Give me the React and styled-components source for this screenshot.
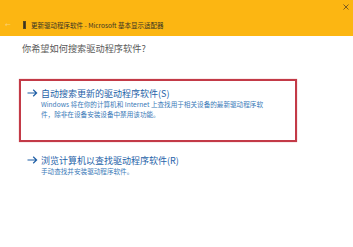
import styled, { createGlobalStyle } from 'styled-components';

const GlobalStyle = createGlobalStyle`
    html, body {
        margin: 0;
        padding: 0;
        background: #ffffff;
    }
    body {
        font-family: "Noto Sans", "Noto Sans CJK SC", sans-serif;
    }
`

function Arrow() {
    return (
        <svg width="11" height="8" viewBox="0 0 11 8">
            <path d="M0.5 4 H9.5 M6.2 0.8 L9.6 4 L6.2 7.2" fill="none" stroke="#1f5fa6" strokeWidth="1.2" />
        </svg>
    )
}

function CloseIcon() {
    return (
        <svg width="6" height="6" viewBox="0 0 6 6">
            <path d="M0.5 0.5 L5.5 5.5 M5.5 0.5 L0.5 5.5" stroke="#6e5120" strokeWidth="0.9" />
        </svg>
    )
}

export default function App() {
    let options = [
        {
            title: "自动搜索更新的驱动程序软件(S)",
            lines: ["Windows 将在你的计算机和 Internet 上查找用于相关设备的最新驱动程序软", "件，除非在设备安装设备中禁用该功能。"],
            selected: true
        },
        {
            title: "浏览计算机以查找驱动程序软件(R)",
            lines: ["手动查找并安装驱动程序软件。"],
            selected: false
        }
    ];

    return (
        <>
            <GlobalStyle />
            <Window>
                <Header>
                    <TopBar>
                        <CloseIcon />
                    </TopBar>
                    <TitleRow>
                        <Back>←</Back>
                        <DeviceIcon />
                        <Title>更新驱动程序软件 - Microsoft 基本显示适配器</Title>
                    </TitleRow>
                </Header>
                <Body>
                    <Heading>你希望如何搜索驱动程序软件?</Heading>
                    {options.map((opt) => (
                        <Option key={opt.title} selected={opt.selected}>
                            <OptionTitle>
                                <ArrowBox><Arrow /></ArrowBox>
                                {opt.title}
                            </OptionTitle>
                            <Description>
                                {opt.lines.map((l) => <div key={l}>{l}</div>)}
                            </Description>
                        </Option>
                    ))}
                </Body>
            </Window>
        </>
    )
}

const Window = styled.div`
    width: 353px;
    height: 247px;
    background: #ffffff;
    overflow: hidden;
`
const Header = styled.div`
    height: 36px;
    background: #fcb612;
    display: flex;
    flex-direction: column;
`
const TopBar = styled.div`
    height: 13px;
    display: flex;
    justify-content: flex-end;
    align-items: center;
    padding-right: 4px;
`
const TitleRow = styled.div`
    height: 23px;
    display: flex;
    align-items: center;
    padding-left: 5px;
`
const Back = styled.span`
    font-size: 7px;
    color: #f9d27a;
    width: 18px;
    font-family: "DejaVu Sans", sans-serif;
`
const DeviceIcon = styled.div`
    width: 3px;
    height: 8px;
    background: #3a3220;
    border: 1px solid #5a4a20;
    box-sizing: border-box;
    margin-right: 5px;
`
const Title = styled.span`
    font-size: 6.5px;
    color: #3a3524;
    font-family: "Noto Sans CJK SC", sans-serif;
`
const Body = styled.div`
    padding-left: 22px;
    display: flex;
    flex-direction: column;
    align-items: flex-start;
`
const Heading = styled.div`
    margin-top: 5px;
    height: 14px;
    line-height: 14px;
    font-size: 9.2px;
    color: #5a5a5a;
    font-family: "Noto Sans CJK SC", sans-serif;
`
const Option = styled.div`
    box-sizing: border-box;
    width: 278px;
    margin-left: -3px;
    padding: 6px 6px 0 ${props => props.selected ? '6px' : '8px'};
    border: ${props => props.selected ? '2px solid #c33a47' : '0'};
    height: ${props => props.selected ? '63px' : 'auto'};
    margin-top: ${props => props.selected ? '24px' : '6px'};
    box-shadow: ${props => props.selected ? '0 0 1px #d98088' : 'none'};
`
const OptionTitle = styled.div`
    display: flex;
    align-items: center;
    height: 12px;
    font-size: 9px;
    color: #2562a8;
    font-family: "Noto Sans CJK SC", sans-serif;
`
const ArrowBox = styled.span`
    width: 14px;
    display: flex;
    align-items: center;
`
const Description = styled.div`
    padding-left: 14px;
    font-size: 6.6px;
    line-height: 10px;
    color: #3a7ab8;
    white-space: nowrap;
    font-family: "Noto Sans CJK SC", sans-serif;
`
